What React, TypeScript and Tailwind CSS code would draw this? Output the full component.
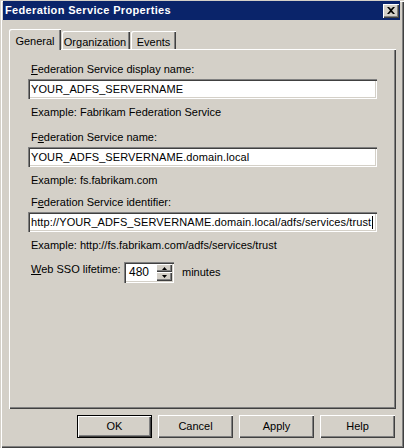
import React from 'react';

// classic 3D edges
const raised = 'shadow-[inset_1px_1px_0_#ffffff,inset_-1px_-1px_0_#404040,inset_-2px_-2px_0_#808080]';
const sunken = 'shadow-[inset_1px_1px_0_#808080,inset_2px_2px_0_#404040,inset_-1px_-1px_0_#ffffff,inset_-2px_-2px_0_#d4d0c8]';

type LabelProps = { text: string; key_: number };

const AccessLabel: React.FC<LabelProps> = ({ text, key_ }) => (
    <>
        {text.slice(0, key_)}
        <span className="underline underline-offset-[1px]">{text.charAt(key_)}</span>
        {text.slice(key_ + 1)}
    </>
);

type FieldProps = { label: string; access: number; value: string; example: string; caret?: boolean; top: string };

const Field: React.FC<FieldProps> = ({ label, access, value, example, caret, top }) => (
    <div className={top}>
        <div className="h-[13px] pl-[3px] leading-[13px]">
            <AccessLabel text={label} key_={access} />
        </div>
        <div className={`mt-[3px] flex h-[20px] items-center bg-white px-[3px] leading-[13px] ${sunken}`}>
            <span className="whitespace-nowrap tracking-[0.1px]">{value}</span>
            {caret && <span className="ml-[1px] inline-block h-[13px] w-[1px] bg-black"></span>}
        </div>
        <div className="mt-[7px] h-[13px] pl-[3px] leading-[13px]">{example}</div>
    </div>
);

const Button: React.FC<{ text: string; isDefault?: boolean }> = ({ text, isDefault }) => (
    <div className={`h-[23px] w-[75px] ${isDefault ? 'border border-black' : ''}`}>
        <div className={`flex h-full w-full items-center justify-center leading-[13px] ${raised}`}>{text}</div>
    </div>
);

const App: React.FC = () => {
    return (
        <div className="h-[448px] w-[404px] overflow-hidden bg-[#d4d0c8] font-['Liberation_Sans',Arial,sans-serif] text-[11px] text-black shadow-[inset_1px_1px_0_#d4d0c8,inset_2px_2px_0_#ffffff,inset_-1px_-1px_0_#404040,inset_-2px_-2px_0_#808080]">
            <div className="pt-[1px] pr-[4px] pl-[3px]">
                {/* title bar */}
                <div className="flex h-[19px] items-center justify-between bg-[#0a246a] pr-[1px] pl-[2px]">
                    <span className="text-[11px] font-bold tracking-[0.35px] text-white">Federation Service Properties</span>
                    <div className={`flex h-[14px] w-[16px] items-center justify-center bg-[#d4d0c8] ${raised}`}>
                        <svg width="8" height="7" viewBox="0 0 8 7" className="mb-[1px]">
                            <path d="M0 0h2l2 2 2-2h2L5 3.5 8 7H6L4 5 2 7H0l3-3.5z" fill="#000" />
                        </svg>
                    </div>
                </div>

                {/* tabs */}
                <div className="mt-[9px] ml-[6px] flex h-[20px] items-end">
                    <div className="relative z-10 -mb-[1px] flex h-[21px] w-[52px] items-start justify-center rounded-tl-[2px] bg-[#d4d0c8] pt-[4px] shadow-[inset_1px_1px_0_#ffffff,inset_-1px_0_0_#404040,inset_-2px_0_0_#808080]">
                        General
                    </div>
                    <div className="ml-[1px] flex h-[18px] w-[68px] items-start justify-center rounded-tl-[2px] pt-[3px] pr-[2px] shadow-[inset_1px_1px_0_#ffffff,inset_-1px_0_0_#404040,inset_-2px_0_0_#808080]">
                        Organization
                    </div>
                    <div className="ml-[1px] flex h-[18px] w-[45px] items-start justify-center rounded-tl-[2px] pt-[3px] shadow-[inset_1px_1px_0_#ffffff,inset_-1px_0_0_#404040,inset_-2px_0_0_#808080]">
                        Events
                    </div>
                </div>

                {/* tab panel */}
                <div className="ml-[6px] h-[360px] w-[387px] px-[19px] pt-[14px] shadow-[inset_1px_1px_0_#ffffff,inset_-1px_-1px_0_#404040,inset_-2px_-2px_0_#808080]">
                    <Field
                        top=""
                        label="Federation Service display name:"
                        access={0}
                        value="YOUR_ADFS_SERVERNAME"
                        example="Example: Fabrikam Federation Service"
                    />
                    <Field
                        top="mt-[12px]"
                        label="Federation Service name:"
                        access={1}
                        value="YOUR_ADFS_SERVERNAME.domain.local"
                        example="Example: fs.fabrikam.com"
                    />
                    <Field
                        top="mt-[9px]"
                        label="Federation Service identifier:"
                        access={1}
                        value="http://YOUR_ADFS_SERVERNAME.domain.local/adfs/services/trust"
                        example="Example: http://fs.fabrikam.com/adfs/services/trust"
                        caret
                    />

                    {/* lifetime */}
                    <div className="mt-[10px] flex items-start pl-[3px]">
                        <div className="mt-[1px] w-[93px] leading-[13px]">
                            <AccessLabel text="Web SSO lifetime:" key_={0} />
                        </div>
                        <div className={`flex h-[21px] w-[50px] bg-white p-[2px] ${sunken}`}>
                            <div className="flex flex-1 items-center pl-[3px] text-[12px] leading-[13px]">480</div>
                            <div className="flex w-[16px] flex-col">
                                <div className={`flex h-[8px] items-center justify-center bg-[#d4d0c8] ${raised}`}>
                                    <svg width="5" height="3" viewBox="0 0 5 3">
                                        <path d="M2.5 0L5 3H0z" fill="#000" />
                                    </svg>
                                </div>
                                <div className={`flex h-[9px] items-center justify-center bg-[#d4d0c8] ${raised}`}>
                                    <svg width="5" height="3" viewBox="0 0 5 3">
                                        <path d="M0 0h5L2.5 3z" fill="#000" />
                                    </svg>
                                </div>
                            </div>
                        </div>
                        <div className="ml-[8px] flex h-[21px] items-center leading-[13px]">minutes</div>
                    </div>
                </div>

                {/* buttons */}
                <div className="mt-[6px] mr-[5px] flex justify-end gap-[6px]">
                    <Button text="OK" isDefault />
                    <Button text="Cancel" />
                    <Button text="Apply" />
                    <Button text="Help" />
                </div>
            </div>
        </div>
    );
};

export default App;
